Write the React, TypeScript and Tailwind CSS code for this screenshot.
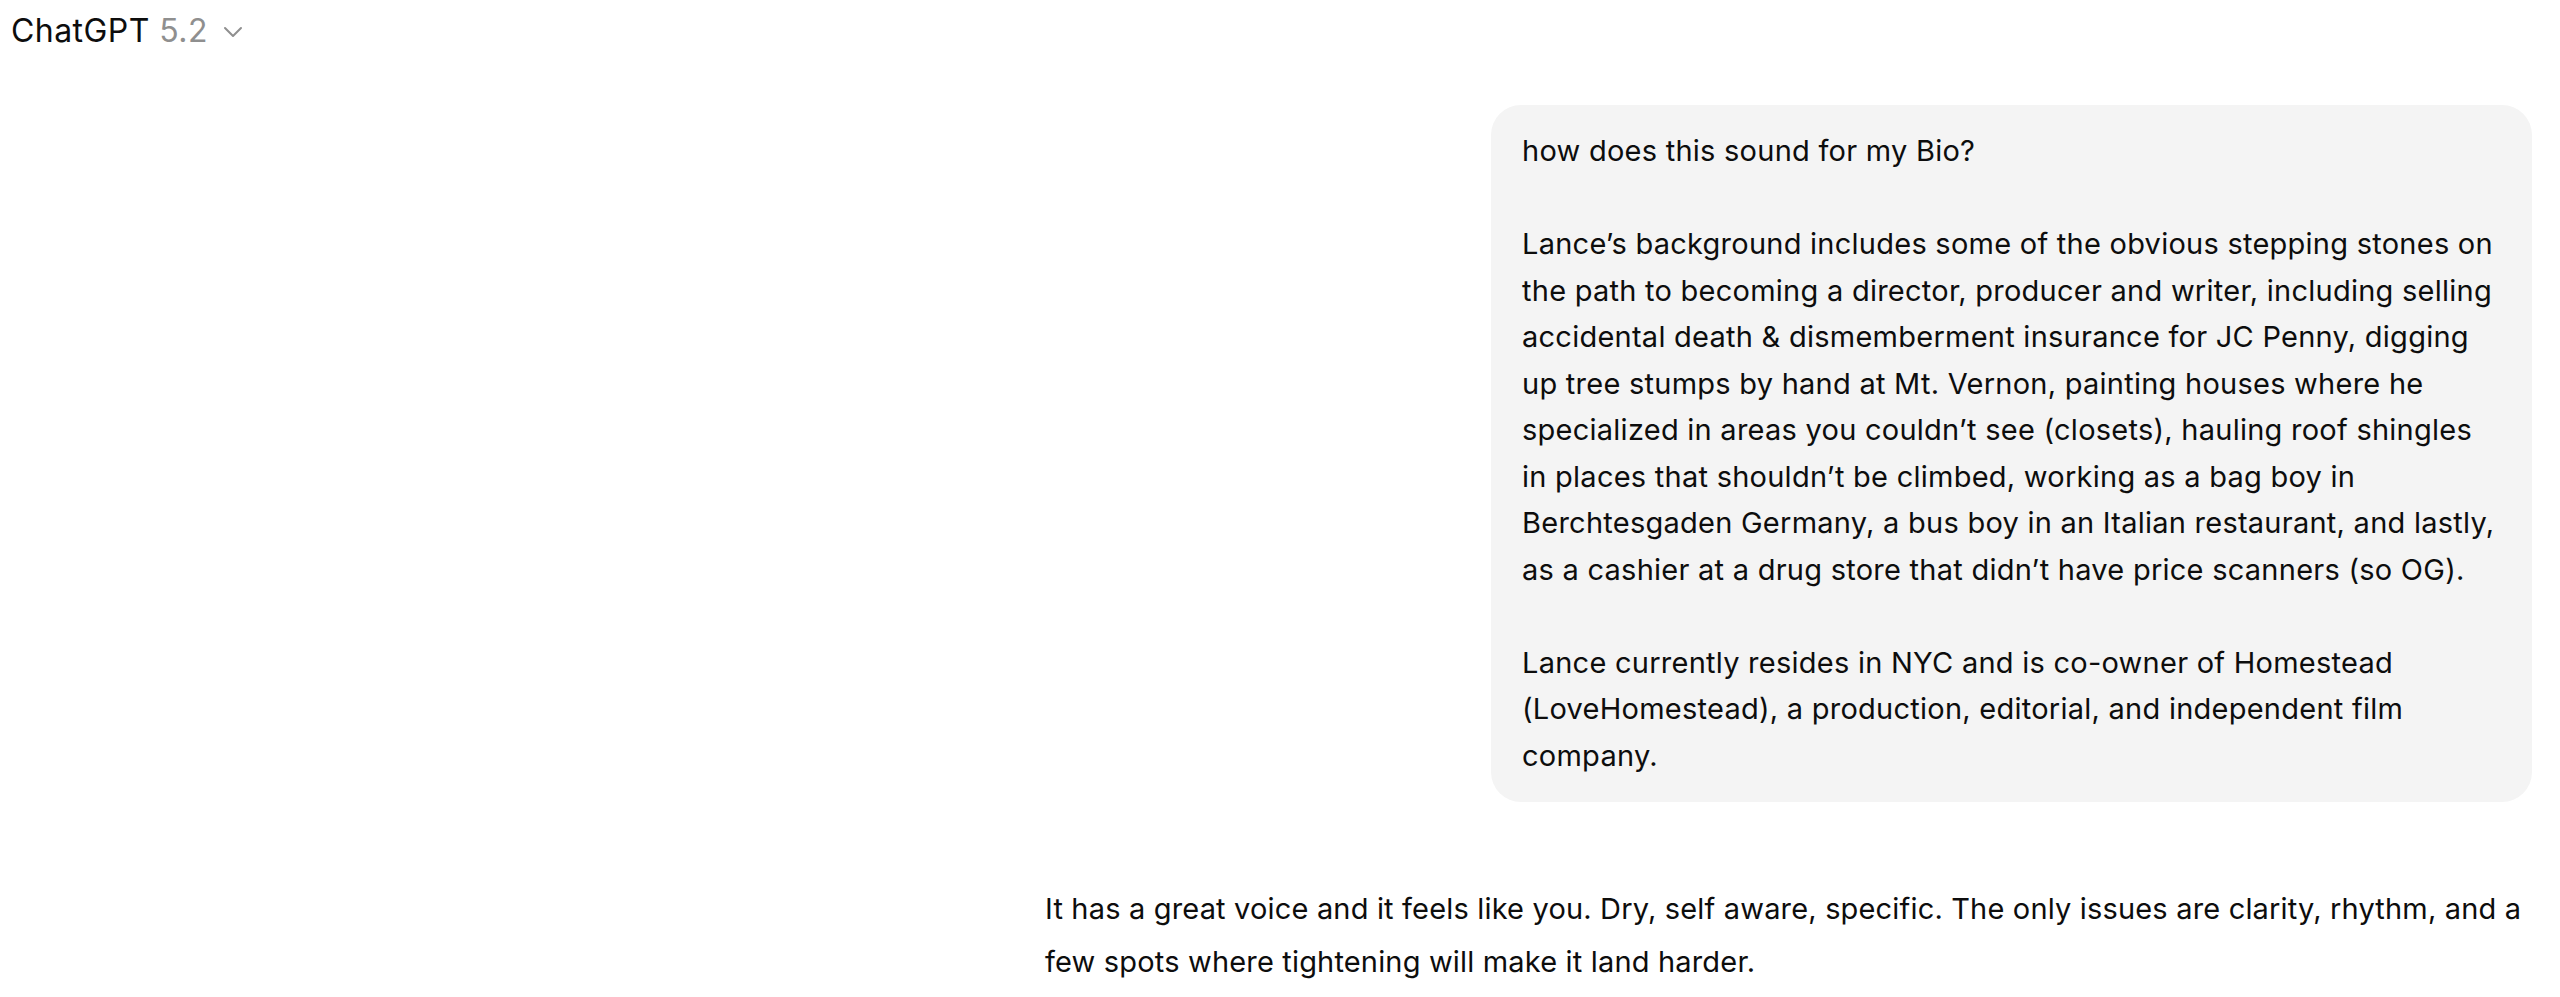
const userLines = [
  "how does this sound for my Bio?",
  "",
  "Lance’s background includes some of the obvious stepping stones on",
  "the path to becoming a director, producer and writer, including selling",
  "accidental death & dismemberment insurance for JC Penny, digging",
  "up tree stumps by hand at Mt. Vernon, painting houses where he",
  "specialized in areas you couldn’t see (closets), hauling roof shingles",
  "in places that shouldn’t be climbed, working as a bag boy in",
  "Berchtesgaden Germany, a bus boy in an Italian restaurant, and lastly,",
  "as a cashier at a drug store that didn’t have price scanners (so OG).",
  "",
  "Lance currently resides in NYC and is co-owner of Homestead",
  "(LoveHomestead), a production, editorial, and independent film",
  "company.",
];

const replyLines = [
  "It has a great voice and it feels like you. Dry, self aware, specific. The only issues are clarity, rhythm, and a",
  "few spots where tightening will make it land harder.",
];

export default function App() {
  return (
    <div className="h-screen overflow-hidden bg-white text-[#0d0d0d] font-['Inter','Noto_Sans',sans-serif]">
      {/* Header */}
      <header className="pl-[11px] pt-[10px] flex items-center h-[51px]">
        <div className="flex items-center gap-[15px] text-[32px] leading-[40px] tracking-[0.45px]">
          <span>
            ChatGPT <span className="text-[#8f8f8f]">5.2</span>
          </span>
          <svg width="20" height="12" viewBox="0 0 20 12" fill="none" className="mt-[2px]">
            <path d="M2 2l8 8 8-8" stroke="#8f8f8f" strokeWidth="2" strokeLinecap="round" strokeLinejoin="round" />
          </svg>
        </div>
      </header>

      {/* Conversation */}
      <main className="pl-[1045px] pr-[28px]">
        <div className="flex justify-end mt-[54px]">
          <div className="w-[1041px] bg-[#f4f4f4] rounded-[30px] px-[31px] pt-[23px] pb-[23px] text-[29px] leading-[46.5px] tracking-[0.25px]">
            {userLines.map((line, i) => (
              <div key={i} className="whitespace-nowrap">
                {line || "\u00a0"}
              </div>
            ))}
          </div>
        </div>

        <div className="mt-[81px] text-[29px] leading-[52.5px] tracking-[0.17px]">
          {replyLines.map((line, i) => (
            <div key={i} className="whitespace-nowrap">
              {line}
            </div>
          ))}
        </div>
      </main>
    </div>
  );
}
